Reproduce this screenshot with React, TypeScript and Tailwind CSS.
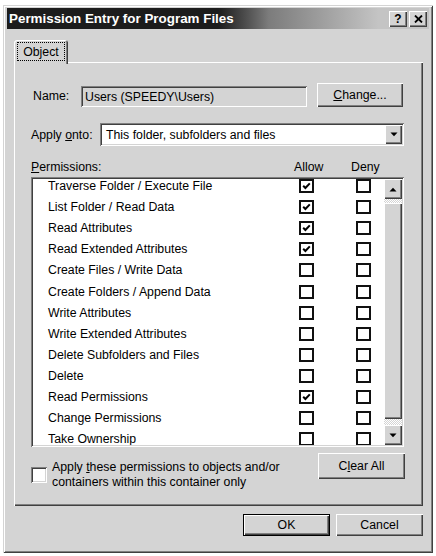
import React from 'react'

const raised = "shadow-[inset_1px_1px_#ffffff,inset_-1px_-1px_#404040,inset_-2px_-2px_#808080]"
const sunken = "shadow-[inset_1px_1px_#808080,inset_-1px_-1px_#ffffff,inset_2px_2px_#404040,inset_-2px_-2px_#d4d4d4]"

const perms: [string, boolean][] = [
  ["Traverse Folder / Execute File", true],
  ["List Folder / Read Data", true],
  ["Read Attributes", true],
  ["Read Extended Attributes", true],
  ["Create Files / Write Data", false],
  ["Create Folders / Append Data", false],
  ["Write Attributes", false],
  ["Write Extended Attributes", false],
  ["Delete Subfolders and Files", false],
  ["Delete", false],
  ["Read Permissions", true],
  ["Change Permissions", false],
  ["Take Ownership", false],
]

function Check({ on }: { on: boolean }) {
  return (
    <div className="w-[15px] h-[14px] border-2 border-[#111] bg-white flex items-center justify-center shrink-0">
      {on && (
        <svg width="9" height="8" viewBox="0 0 9 8">
          <polyline points="1.2,3.8 3.4,6 7.8,1.4" fill="none" stroke="#000" strokeWidth="2" />
        </svg>
      )}
    </div>
  )
}

function Arrow({ up }: { up?: boolean }) {
  return (
    <svg width="8" height="5" viewBox="0 0 8 5">
      <polygon points={up ? "0.5,4.5 4,0.8 7.5,4.5" : "0.5,0.5 4,4.2 7.5,0.5"} fill="#000" />
    </svg>
  )
}

export default function App() {
  return (
    <div className="w-[436px] h-[556px] bg-white pt-[5px] pl-[3px] font-['Liberation_Sans',Arial,sans-serif] text-black text-[12.3px] leading-[14px]">
      <div className="w-[430px] h-[548px] bg-[#d4d4d4] pt-[3px] px-[4px] shadow-[inset_1px_1px_#d4d4d4,inset_-1px_-1px_#404040,inset_2px_2px_#ffffff,inset_-2px_-2px_#808080]">
        {/* title bar */}
        <div className="h-[21px] flex items-center pl-[2px] pr-[2px] bg-linear-to-r from-[#1c1c1c] from-[50%] via-[#7c7c7c] via-[62%] to-[#c4c4c4] to-[88%]">
          <span className="text-white font-bold text-[13.4px] leading-[16px]">Permission Entry for Program Files</span>
          <div className="ml-auto flex gap-[2px]">
            <div className={`w-[18px] h-[16px] bg-[#d4d4d4] flex items-center justify-center font-bold text-[12px] leading-[12px] ${raised}`}>?</div>
            <div className={`w-[18px] h-[16px] bg-[#d4d4d4] flex items-center justify-center ${raised}`}>
              <svg width="9" height="8" viewBox="0 0 9 8">
                <path d="M1 0.5 L8 7.5 M8 0.5 L1 7.5" stroke="#000" strokeWidth="1.8" />
              </svg>
            </div>
          </div>
        </div>

        {/* tab */}
        <div className="mt-[11px] ml-[7px] relative z-10 w-[54px] h-[24px] -mb-[2px] bg-[#d4d4d4] rounded-t-[3px] pt-[2px] pl-[3px] shadow-[inset_1px_1px_#ffffff,inset_-1px_0_#404040,inset_-2px_0_#808080]">
          <div className="w-[48px] h-[19px] border border-dotted border-black flex items-center justify-center">Object</div>
        </div>

        {/* tab page */}
        <div className="ml-[7px] w-[409px] h-[444px] pt-[21px] flex flex-col shadow-[inset_1px_1px_#ffffff,inset_-1px_-1px_#404040,inset_-2px_-2px_#808080]">
          <div className="flex items-start h-[24px] ml-[19px]">
            <span className="w-[48px] mt-[6px]">Name:</span>
            <div className={`w-[226px] h-[21px] mt-[3px] flex items-center pl-[4px] ${sunken}`}>Users (SPEEDY\Users)</div>
            <div className={`ml-[10px] w-[86px] h-[24px] flex items-center justify-center ${raised}`}>
              <span><u>C</u>hange...</span>
            </div>
          </div>

          <div className="flex items-center h-[23px] mt-[16px] ml-[17px]">
            <span className="w-[69px]">Apply <u>o</u>nto:</span>
            <div className={`w-[304px] h-[23px] bg-white p-[2px] flex ${sunken}`}>
              <div className="flex-1 flex items-center pl-[4px]">This folder, subfolders and files</div>
              <div className={`w-[17px] h-[19px] bg-[#d4d4d4] flex items-center justify-center ${raised}`}>
                <Arrow />
              </div>
            </div>
          </div>

          <div className="flex h-[14px] mt-[14px] ml-[17px]">
            <span className="w-[263px]"><u>P</u>ermissions:</span>
            <span className="w-[57px]">Allow</span>
            <span>Deny</span>
          </div>

          <div className={`ml-[17px] mt-[3px] w-[373px] h-[270px] bg-white p-[2px] flex ${sunken}`}>
            <div className="flex-1 overflow-hidden">
              <div className="-mt-[3.5px]">
                {perms.map(([name, allow]) => (
                  <div key={name} className="h-[21.1px] flex items-center">
                    <span className="w-[266px] pl-[15px] whitespace-nowrap">{name}</span>
                    <Check on={allow} />
                    <div className="ml-[42px]">
                      <Check on={false} />
                    </div>
                  </div>
                ))}
              </div>
            </div>
            <div className="w-[18px] flex flex-col">
              <div className={`h-[20px] bg-[#d4d4d4] flex items-center justify-center ${raised}`}>
                <Arrow up />
              </div>
              <div className="flex-1 pt-[4px] pb-[6px] bg-[image:repeating-conic-gradient(#ffffff_0_25%,#d4d4d4_0_50%)] bg-[length:2px_2px]">
                <div className={`h-full bg-[#d4d4d4] ${raised}`} />
              </div>
              <div className={`h-[20px] bg-[#d4d4d4] flex items-center justify-center ${raised}`}>
                <Arrow />
              </div>
            </div>
          </div>

          <div className="flex items-start mt-[6px] ml-[17px]">
            <div className={`w-[16px] h-[16px] bg-white mt-[14px] ${sunken}`} />
            <div className="ml-[5px] mt-[7px] leading-[15px]">
              <div>Apply <u>t</u>hese permissions to objects and/or</div>
              <div>containers within this container only</div>
            </div>
            <div className={`ml-auto mr-[18px] w-[87px] h-[26px] flex items-center justify-center ${raised}`}>
              <span>C<u>l</u>ear All</span>
            </div>
          </div>
        </div>

        {/* dialog buttons */}
        <div className="ml-[7px] w-[409px] mt-[8px] flex justify-end gap-[6px]">
          <div className="w-[87px] h-[22px] border border-black">
            <div className={`w-full h-full flex items-center justify-center ${raised}`}>OK</div>
          </div>
          <div className={`w-[87px] h-[22px] flex items-center justify-center ${raised}`}>Cancel</div>
        </div>
      </div>
    </div>
  )
}
